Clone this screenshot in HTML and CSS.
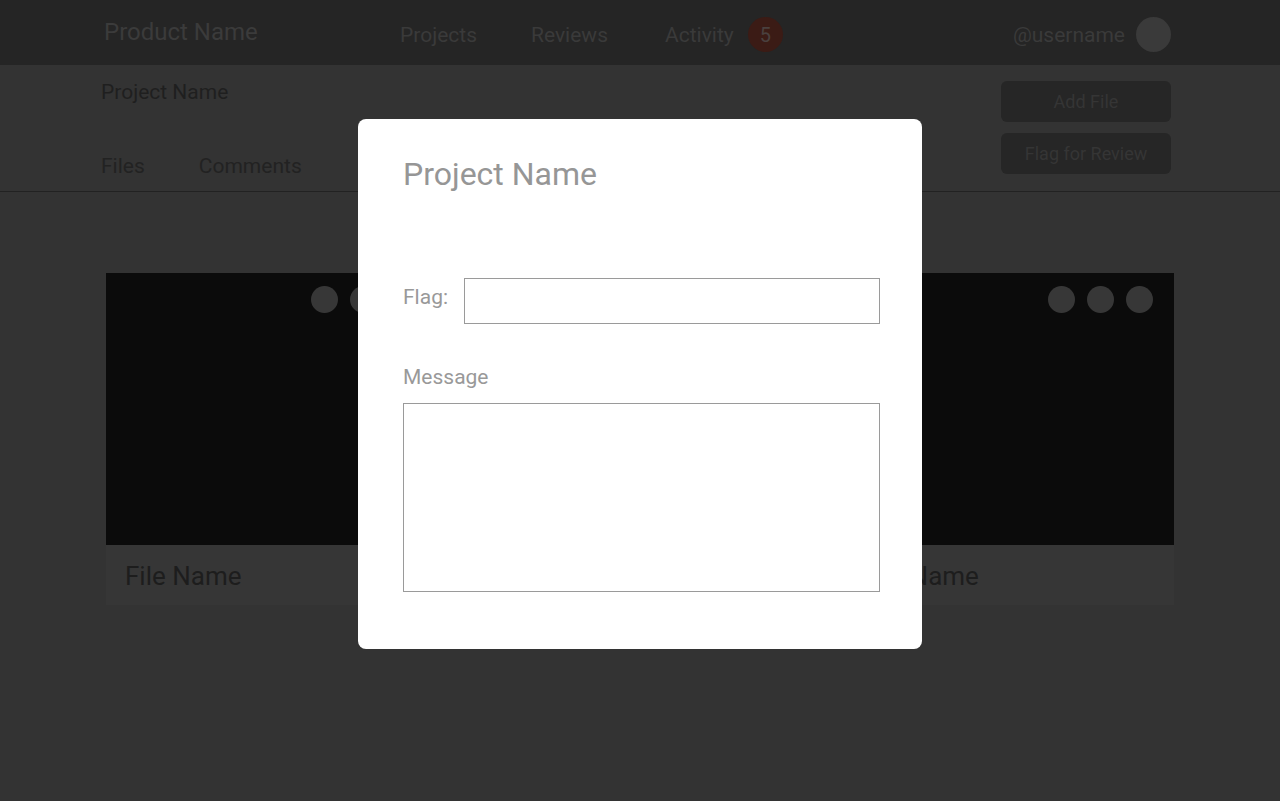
FILE: index.html
```html
<!DOCTYPE html>
<html lang="en">
<head>
<meta charset="utf-8">
<title>Project Name</title>
<link rel="stylesheet" href="styles.css">
</head>
<body>
<header class="topbar">
  <div class="brand">Product Name</div>
  <nav class="nav">
    <a class="nav-link">Projects</a>
    <a class="nav-link">Reviews</a>
    <a class="nav-link nav-link-activity">Activity <span class="badge">5</span></a>
  </nav>
  <div class="user">
    <span class="username">@username</span>
    <span class="avatar"></span>
  </div>
</header>

<section class="subheader">
  <div class="sub-left">
    <div class="project-title">Project Name</div>
    <div class="tabs">
      <span class="tab">Files</span>
      <span class="tab">Comments</span>
    </div>
  </div>
  <div class="sub-actions">
    <button class="btn">Add File</button>
    <button class="btn">Flag for Review</button>
  </div>
</section>

<main class="main">
  <div class="cards">
    <div class="card">
      <div class="card-image">
        <span class="dot"></span><span class="dot"></span><span class="dot"></span>
      </div>
      <div class="card-footer">File Name</div>
    </div>
    <div class="card">
      <div class="card-image">
        <span class="dot"></span><span class="dot"></span><span class="dot"></span>
      </div>
      <div class="card-footer">File Name</div>
    </div>
    <div class="card">
      <div class="card-image">
        <span class="dot"></span><span class="dot"></span><span class="dot"></span>
      </div>
      <div class="card-footer">File Name</div>
    </div>
  </div>
</main>

<div class="overlay">
  <div class="modal">
    <h2 class="modal-title">Project Name</h2>
    <div class="form">
      <div class="flag-row">
        <label class="field-label flag-label">Flag:</label>
        <input class="input" type="text">
      </div>
      <label class="field-label message-label">Message</label>
      <textarea class="textarea"></textarea>
    </div>
  </div>
</div>
</body>
</html>
```

FILE: styles.css
```css
* { box-sizing: border-box; }

html, body {
  margin: 0;
  padding: 0;
}

body {
  background: #333333;
  font-family: Roboto, "Liberation Sans", sans-serif;
  min-height: 100vh;
  overflow: hidden;
}

/* Top bar */
.topbar {
  height: 65px;
  background: #252525;
  display: flex;
  align-items: center;
  padding: 0 109px 0 104px;
}

.brand {
  width: 296px;
  font-size: 24px;
  line-height: 28px;
  color: #3b3b3b;
  padding-bottom: 2px;
}

.nav {
  display: flex;
  align-items: center;
  gap: 54px;
  padding-top: 4px;
}

.nav-link {
  display: flex;
  align-items: center;
  font-size: 21px;
  line-height: 28px;
  color: #3a3a3a;
}

.nav-link-activity {
  margin-left: 3px;
}

.badge {
  width: 35px;
  height: 35px;
  margin-left: 14px;
  border-radius: 50%;
  background: #3b1b15;
  color: #4a403e;
  display: flex;
  align-items: center;
  justify-content: center;
  font-size: 20px;
  line-height: 1;
}

.user {
  margin-left: auto;
  display: flex;
  align-items: center;
  gap: 11px;
  padding-top: 4px;
}

.username {
  font-size: 21px;
  line-height: 28px;
  color: #3a3a3a;
}

.avatar {
  width: 35px;
  height: 35px;
  border-radius: 50%;
  background: #3a3a3a;
}

/* Sub header */
.subheader {
  height: 127px;
  background: #333333;
  border-bottom: 1px solid #222222;
  display: flex;
  justify-content: space-between;
  padding: 16px 109px 14px 101px;
}

.sub-left {
  display: flex;
  flex-direction: column;
  justify-content: space-between;
}

.project-title {
  font-size: 21px;
  line-height: 22px;
  color: #1f1f1f;
}

.tabs {
  display: flex;
  gap: 54px;
}

.tab {
  font-size: 21px;
  line-height: 22px;
  color: #222222;
}

.sub-actions {
  display: flex;
  flex-direction: column;
  gap: 11px;
}

.btn {
  width: 170px;
  height: 41px;
  border: none;
  border-radius: 6px;
  background: #262626;
  color: #353535;
  font-family: Roboto, "Liberation Sans", sans-serif;
  font-size: 18px;
  padding: 0;
}

/* Main */
.main {
  padding: 81px 106px 0 106px;
}

.cards {
  display: grid;
  grid-template-columns: repeat(3, 1fr);
  gap: 38px;
}

.card {
  display: flex;
  flex-direction: column;
}

.card-image {
  height: 272px;
  background: #0b0b0b;
  display: flex;
  justify-content: flex-end;
  align-items: flex-start;
  gap: 12px;
  padding: 13px 21px;
}

.dot {
  width: 27px;
  height: 27px;
  border-radius: 50%;
  background: #373737;
}

.card-footer {
  height: 60px;
  background: #363636;
  display: flex;
  align-items: center;
  padding: 2px 0 0 19px;
  font-size: 26px;
  line-height: 30px;
  color: #1d1d1d;
}

/* Modal */
.overlay {
  position: fixed;
  inset: 0;
  display: flex;
  justify-content: center;
  align-items: flex-start;
  padding-top: 119px;
}

.modal {
  width: 564px;
  height: 530px;
  background: #ffffff;
  border-radius: 8px;
  padding: 35px 42px 57px 45px;
}

.modal-title {
  margin: 0;
  font-size: 32px;
  line-height: 40px;
  font-weight: 400;
  color: #969696;
}

.form {
  margin-top: 84px;
  display: flex;
  flex-direction: column;
}

.flag-row {
  display: flex;
  align-items: flex-start;
  gap: 16px;
}

.field-label {
  font-size: 21px;
  line-height: 24px;
  color: #999999;
}

.flag-label {
  margin-top: 7px;
}

.input {
  flex: 1;
  height: 46px;
  border: 1px solid #9a9a9a;
  background: #ffffff;
  outline: none;
  padding: 0 8px;
}

.message-label {
  margin-top: 41px;
}

.textarea {
  display: block;
  margin-top: 14px;
  width: 100%;
  height: 189px;
  border: 1px solid #9a9a9a;
  resize: none;
  outline: none;
  font-family: Roboto, "Liberation Sans", sans-serif;
}
```
